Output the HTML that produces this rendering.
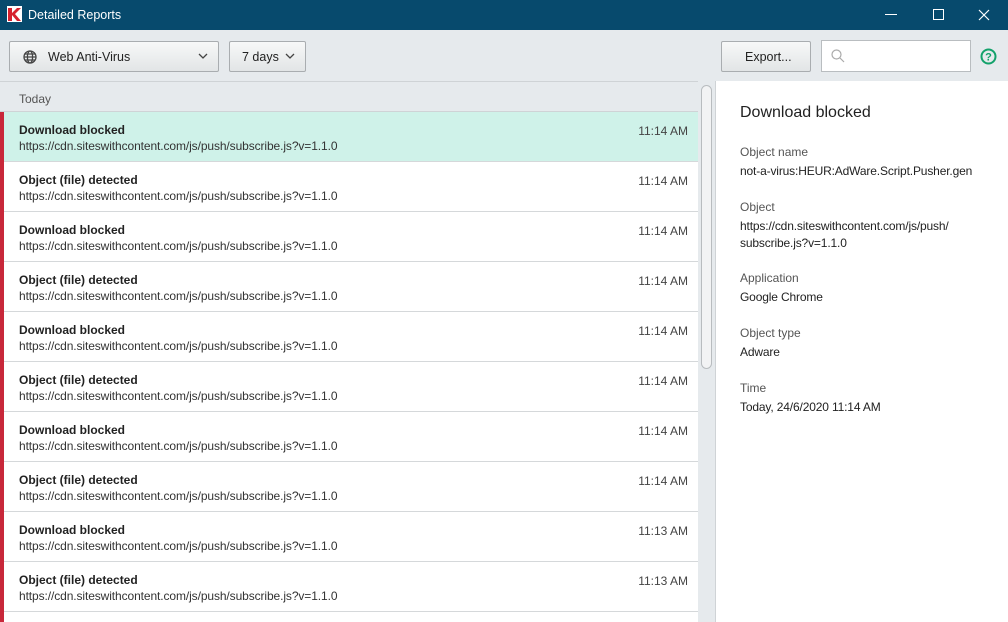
<!DOCTYPE html>
<html><head><style>
*{margin:0;padding:0;box-sizing:border-box}
html,body{width:1008px;height:622px;overflow:hidden}
body{font-family:"Liberation Sans",sans-serif;background:#e6eaed;position:relative;color:#222}
.title{position:absolute;left:0;top:0;width:1008px;height:30px;background:#074a6d;color:#fff;font-size:12.5px}
.title .t{position:absolute;left:28px;top:8px}
.btn{position:absolute;top:41px;height:31px;border:1px solid #a9adb0;border-radius:2px;background:linear-gradient(#f7f8f8,#e2e5e6);font-size:12.5px;color:#222}
.list{position:absolute;left:0;top:81px;width:698px;height:541px;overflow:hidden;border-top:1px solid #cfd3d6;background:#fff}
.bar{position:absolute;left:0;top:30px;width:4px;height:520px;background:#c8283a;z-index:2}
.hdr{height:30px;background:#e6eaed;border-bottom:1px solid #cfd3d6;font-size:12px;color:#555;padding:10px 0 0 19px}
.row{height:50px;background:#fff;border-bottom:1px solid #d5d8da;position:relative}
.row.sel{background:#cff2e9}
.row b{position:absolute;left:19px;top:11px;font-size:12px;color:#222}
.row span.u{position:absolute;left:19px;top:27px;font-size:12px;color:#333;letter-spacing:-0.1px}
.row span.tm{position:absolute;right:10px;top:12px;font-size:12px;color:#444}
.sb{position:absolute;left:698px;top:81px;width:18px;height:541px;background:#e6eaed;border-right:1px solid #cfd3d6}
.thumb{position:absolute;left:3px;top:4px;width:11px;height:284px;border:1px solid #b8bcbf;border-radius:6px;background:#f2f3f4}
.det{position:absolute;left:716px;top:81px;width:292px;height:541px;background:#fff;font-size:12px;white-space:nowrap;overflow:hidden}
.det div{position:absolute;left:24px;line-height:17px}
.det .l{color:#555}
.det .v{color:#222;letter-spacing:-0.15px}
</style></head><body>
<div class="title">
<svg style="position:absolute;left:7px;top:6px" width="16" height="17"><rect x="0" y="0" width="15" height="16" fill="#fff"/><path d="M1 2h4v5l5-5h4l-6 6 6 7h-4l-5-6v6H1z" fill="#d6222e"/></svg>
<span class="t">Detailed Reports</span>
<span style="position:absolute;left:885px;top:14px;width:12px;height:1px;background:#fff"></span>
<span style="position:absolute;left:933px;top:9px;width:11px;height:11px;border:1px solid #fff"></span>
<svg style="position:absolute;left:978px;top:9px" width="12" height="12"><path d="M1 1l10 10M11 1L1 11" stroke="#fff" stroke-width="1.2"/></svg>
</div>
<div class="btn" style="left:9px;width:210px">
<svg style="position:absolute;left:13px;top:8px" width="14" height="14" viewBox="0 0 14 14" fill="none" stroke="#444" stroke-width="1.3"><circle cx="7" cy="7" r="6"/><ellipse cx="7" cy="7" rx="2.6" ry="6"/><path d="M1 7h12M2 4h10M2 10h10"/></svg>
<span style="position:absolute;left:38px;top:8px">Web Anti-Virus</span>
<svg style="position:absolute;left:188px;top:11px" width="10" height="6"><path d="M1 1l4 4 4-4" stroke="#444" fill="none" stroke-width="1.3"/></svg></div>
<div class="btn" style="left:229px;width:77px"><span style="position:absolute;left:12px;top:8px">7 days</span>
<svg style="position:absolute;left:55px;top:11px" width="10" height="6"><path d="M1 1l4 4 4-4" stroke="#444" fill="none" stroke-width="1.3"/></svg></div>
<div class="btn" style="left:721px;width:90px"><span style="position:absolute;left:23px;top:8px">Export...</span></div>
<div style="position:absolute;left:821px;top:40px;width:150px;height:32px;background:#fff;border:1px solid #b9bdc0">
<svg style="position:absolute;left:9px;top:8px" width="14" height="14" fill="none" stroke="#aaa" stroke-width="1.2"><circle cx="5.5" cy="5.5" r="4.5"/><path d="M9 9l4 4"/></svg></div>
<svg style="position:absolute;left:980px;top:48px" width="17" height="17"><circle cx="8.5" cy="8.5" r="7" fill="none" stroke="#13a26b" stroke-width="2"/><text x="8.5" y="12.5" font-size="11" font-weight="bold" fill="#13a26b" text-anchor="middle" font-family="Liberation Sans">?</text></svg>
<div class="list">
<div class="bar"></div>
<div class="hdr">Today</div>
<div class="row sel"><b>Download blocked</b><span class="u">https://cdn.siteswithcontent.com/js/push/subscribe.js?v=1.1.0</span><span class="tm">11:14 AM</span></div>
<div class="row"><b>Object (file) detected</b><span class="u">https://cdn.siteswithcontent.com/js/push/subscribe.js?v=1.1.0</span><span class="tm">11:14 AM</span></div>
<div class="row"><b>Download blocked</b><span class="u">https://cdn.siteswithcontent.com/js/push/subscribe.js?v=1.1.0</span><span class="tm">11:14 AM</span></div>
<div class="row"><b>Object (file) detected</b><span class="u">https://cdn.siteswithcontent.com/js/push/subscribe.js?v=1.1.0</span><span class="tm">11:14 AM</span></div>
<div class="row"><b>Download blocked</b><span class="u">https://cdn.siteswithcontent.com/js/push/subscribe.js?v=1.1.0</span><span class="tm">11:14 AM</span></div>
<div class="row"><b>Object (file) detected</b><span class="u">https://cdn.siteswithcontent.com/js/push/subscribe.js?v=1.1.0</span><span class="tm">11:14 AM</span></div>
<div class="row"><b>Download blocked</b><span class="u">https://cdn.siteswithcontent.com/js/push/subscribe.js?v=1.1.0</span><span class="tm">11:14 AM</span></div>
<div class="row"><b>Object (file) detected</b><span class="u">https://cdn.siteswithcontent.com/js/push/subscribe.js?v=1.1.0</span><span class="tm">11:14 AM</span></div>
<div class="row"><b>Download blocked</b><span class="u">https://cdn.siteswithcontent.com/js/push/subscribe.js?v=1.1.0</span><span class="tm">11:13 AM</span></div>
<div class="row"><b>Object (file) detected</b><span class="u">https://cdn.siteswithcontent.com/js/push/subscribe.js?v=1.1.0</span><span class="tm">11:13 AM</span></div>
</div>
<div class="sb"><div class="thumb"></div></div>
<div class="det">
<div style="top:23px;font-size:16px;color:#222">Download blocked</div>
<div class="l" style="top:63px">Object name</div><div class="v" style="top:82px">not-a-virus:HEUR:AdWare.Script.Pusher.gen</div>
<div class="l" style="top:118px">Object</div><div class="v" style="top:137px">https://cdn.siteswithcontent.com/js/push/<br>subscribe.js?v=1.1.0</div>
<div class="l" style="top:189px">Application</div><div class="v" style="top:208px">Google Chrome</div>
<div class="l" style="top:244px">Object type</div><div class="v" style="top:263px">Adware</div>
<div class="l" style="top:299px">Time</div><div class="v" style="top:318px">Today, 24/6/2020 11:14 AM</div>
</div>
</body></html>
